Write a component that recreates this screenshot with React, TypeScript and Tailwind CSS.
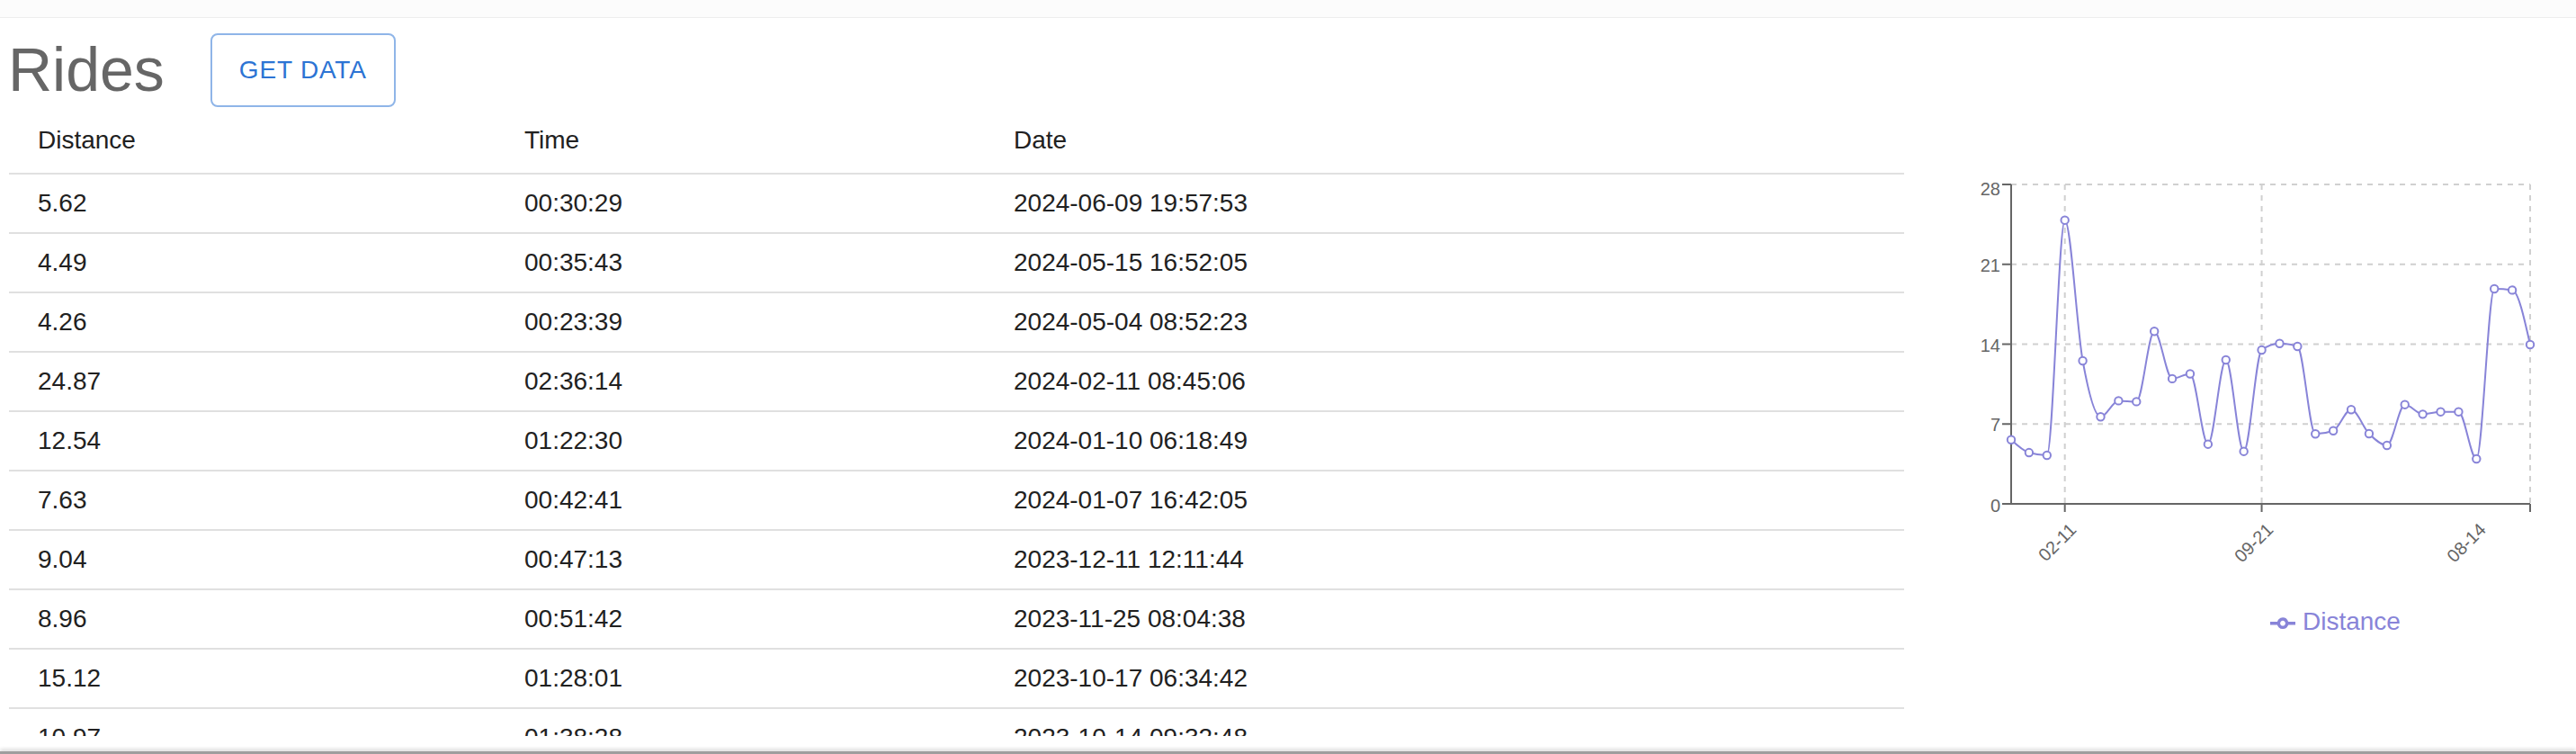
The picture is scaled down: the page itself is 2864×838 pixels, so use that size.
import React from "react";

const rows: [string, string, string][] = [
  ["5.62", "00:30:29", "2024-06-09 19:57:53"],
  ["4.49", "00:35:43", "2024-05-15 16:52:05"],
  ["4.26", "00:23:39", "2024-05-04 08:52:23"],
  ["24.87", "02:36:14", "2024-02-11 08:45:06"],
  ["12.54", "01:22:30", "2024-01-10 06:18:49"],
  ["7.63", "00:42:41", "2024-01-07 16:42:05"],
  ["9.04", "00:47:13", "2023-12-11 12:11:44"],
  ["8.96", "00:51:42", "2023-11-25 08:04:38"],
  ["15.12", "01:28:01", "2023-10-17 06:34:42"],
  ["10.97", "01:38:28", "2023-10-14 09:32:48"],
  ["11.40", "01:05:12", "2023-10-08 07:21:09"],
];

const data = [
  5.62, 4.49, 4.26, 24.87, 12.54, 7.63, 9.04, 8.96, 15.12, 10.97, 11.4, 5.23,
  12.62, 4.6, 13.49, 14.06, 13.8, 6.13, 6.41, 8.26, 6.15, 5.13, 8.7, 7.86,
  8.07, 8.07, 3.94, 18.85, 18.74, 13.96,
];

function sign(x: number) {
  return x < 0 ? -1 : 1;
}

function monotonePath(pts: [number, number][]) {
  const n = pts.length;
  const m: number[] = new Array(n).fill(0);
  for (let i = 1; i < n - 1; i++) {
    const [x0, y0] = pts[i - 1];
    const [x1, y1] = pts[i];
    const [x2, y2] = pts[i + 1];
    const h0 = x1 - x0;
    const h1 = x2 - x1;
    const s0 = (y1 - y0) / h0;
    const s1 = (y2 - y1) / h1;
    const p = (s0 * h1 + s1 * h0) / (h0 + h1);
    m[i] =
      (sign(s0) + sign(s1)) *
        Math.min(Math.abs(s0), Math.abs(s1), 0.5 * Math.abs(p)) || 0;
  }
  {
    const h = pts[1][0] - pts[0][0];
    m[0] = (3 * (pts[1][1] - pts[0][1]) / h - m[1]) / 2;
    const h2 = pts[n - 1][0] - pts[n - 2][0];
    m[n - 1] = (3 * (pts[n - 1][1] - pts[n - 2][1]) / h2 - m[n - 2]) / 2;
  }
  let d = `M${pts[0][0]},${pts[0][1]}`;
  for (let i = 0; i < n - 1; i++) {
    const [xa, ya] = pts[i];
    const [xb, yb] = pts[i + 1];
    const dx = (xb - xa) / 3;
    d += `C${xa + dx},${ya + dx * m[i]},${xb - dx},${yb - dx * m[i + 1]},${xb},${yb}`;
  }
  return d;
}

function Chart() {
  const X0 = 119;
  const X1 = 696;
  const Y0 = 440;
  const YT = 85;
  const xs = (i: number) => X0 + (i * (X1 - X0)) / 29;
  const ys = (v: number) => Y0 - (v * (Y0 - YT)) / 28;
  const pts = data.map((v, i) => [xs(i), ys(v)] as [number, number]);
  const path = monotonePath(pts);
  const yTicks = [0, 7, 14, 21, 28];
  const xTickIdx = [3, 14, 29];
  const xLabels: { x: number; t: string }[] = [
    { x: xs(3) + 14, t: "02-11" },
    { x: xs(14) + 14, t: "09-21" },
    { x: 648, t: "08-14" },
  ];
  return (
    <svg width="747" height="698" viewBox="0 0 747 698" className="block">
      {[7, 14, 21, 28].map((v) => (
        <line
          key={"h" + v}
          x1={X0}
          x2={X1}
          y1={ys(v)}
          y2={ys(v)}
          stroke="#d0d0d0"
          strokeWidth="2"
          strokeDasharray="6 6"
        />
      ))}
      {xTickIdx.map((i) => (
        <line
          key={"v" + i}
          x1={xs(i)}
          x2={xs(i)}
          y1={YT}
          y2={Y0}
          stroke="#d0d0d0"
          strokeWidth="2"
          strokeDasharray="6 6"
        />
      ))}
      <line x1={X0} x2={X0} y1={YT} y2={Y0} stroke="#666" strokeWidth="2" />
      <line x1={X0} x2={X1} y1={Y0} y2={Y0} stroke="#666" strokeWidth="2" />
      {yTicks.map((v) => (
        <g key={"yt" + v}>
          <line x1={X0 - 10} x2={X0} y1={ys(v)} y2={ys(v)} stroke="#666" strokeWidth="2" />
          <text
            x={107}
            y={ys(v) + (v === 28 ? 11.5 : v === 0 ? 9 : 8)}
            textAnchor="end"
            fontSize="20"
            fill="#666"
          >
            {v}
          </text>
        </g>
      ))}
      {xTickIdx.map((i) => (
        <line key={"xt" + i} x1={xs(i)} x2={xs(i)} y1={Y0} y2={Y0 + 9} stroke="#666" strokeWidth="2" />
      ))}
      {xLabels.map((l) => (
        <text
          key={l.t}
          x={l.x}
          y={470}
          textAnchor="end"
          fontSize="20"
          fill="#666"
          transform={`rotate(-45 ${l.x} 470)`}
        >
          {l.t}
        </text>
      ))}
      <path d={path} fill="none" stroke="#8884d8" strokeWidth="2" />
      {pts.map(([x, y], i) => (
        <circle key={i} cx={x} cy={y} r="4.2" fill="#fff" stroke="#8884d8" strokeWidth="2" />
      ))}
      <g transform="translate(407 558.7) scale(0.875)">
        <path
          d="M0,16h10.67A5.33,5.33,0,1,1,21.33,16H32M21.33,16A5.33,5.33,0,1,1,10.67,16"
          fill="none"
          stroke="#8884d8"
          strokeWidth="4"
        />
      </g>
      <text x={443} y={580} fontSize="28" fill="#8884d8">
        Distance
      </text>
    </svg>
  );
}

export default function App() {
  return (
    <div className="h-[838px] w-[2864px] overflow-hidden bg-white flex flex-col font-['Liberation_Sans',Arial,sans-serif]">
      <div className="h-[20px] shrink-0 bg-[#fcfcfc] border-b border-[#eeeeee]" />
      <div className="mt-[17px] h-[82px] shrink-0 flex items-center pl-[9px]">
        <h1 className="text-[68px] leading-[80px] font-normal text-[#666666] mb-[3px]">Rides</h1>
        <button className="ml-[51px] h-[82px] px-[30px] border-2 border-[#8fb5e8] rounded-[8px] text-[28px] tracking-[0.8px] text-[#2c74d4] uppercase">
          Get Data
        </button>
      </div>
      <div className="mt-px h-[698px] shrink-0 flex pl-[10px] overflow-hidden">
        <div className="w-[2107px] shrink-0 text-[28px] text-[#212121]">
          <div className="grid grid-cols-[541px_544px_1fr] border-b-2 border-[#e0e0e0]">
            <div className="pl-[32px] py-[12px] leading-[48px]">Distance</div>
            <div className="pl-[32px] py-[12px] leading-[48px]">Time</div>
            <div className="pl-[32px] py-[12px] leading-[48px]">Date</div>
          </div>
          {rows.map((r, i) => (
            <div key={i} className="grid grid-cols-[541px_544px_1fr] border-b-2 border-[#e0e0e0]">
              <div className="pl-[32px] py-[12px] leading-[40px]">{r[0]}</div>
              <div className="pl-[32px] py-[12px] leading-[40px]">{r[1]}</div>
              <div className="pl-[32px] py-[12px] leading-[40px]">{r[2]}</div>
            </div>
          ))}
        </div>
        <div className="flex-1 min-w-0">
          <Chart />
        </div>
      </div>
      <div className="flex-1" />
      <div className="h-[3px] shrink-0 bg-[#9e9e9e] shadow-[0_-2px_4px_rgba(0,0,0,0.2)]" />
    </div>
  );
}
